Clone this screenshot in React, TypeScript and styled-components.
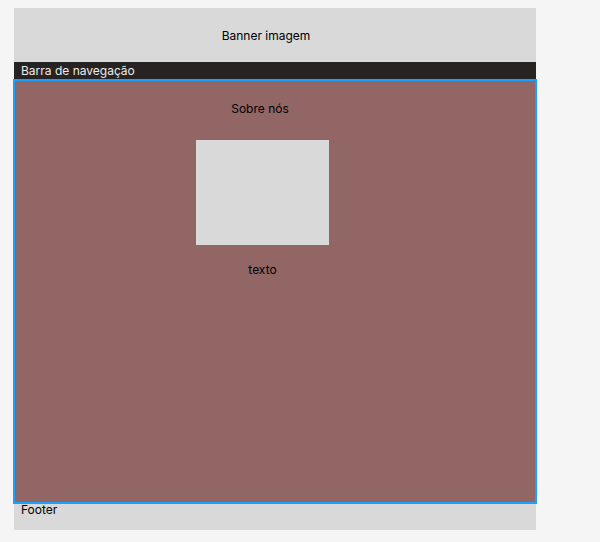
import React from "react";
import styled, { createGlobalStyle } from "styled-components";

const GlobalStyle = createGlobalStyle`
  html, body {
    margin: 0;
    padding: 0;
    background-color: #f5f5f5;
    font-family: Inter, "Noto Sans", sans-serif;
  }
`;

const App = () => {
  return (
    <>
      <GlobalStyle />
      <Page>
        <Frame>
          <Banner>Banner imagem</Banner>
          <NavBar>Barra de navegação</NavBar>
          <Main>
            <Column>
              <Title>Sobre nós</Title>
              <ImageBox />
              <Text>texto</Text>
            </Column>
          </Main>
          <Footer>Footer</Footer>
        </Frame>
      </Page>
    </>
  );
};

const Page = styled.div`
  width: 600px;
  height: 542px;
  padding: 8px 0 0 14px;
  box-sizing: border-box;
`;

const Frame = styled.div`
  display: flex;
  flex-direction: column;
  width: 522px;
`;

const Banner = styled.div`
  height: 54px;
  display: flex;
  align-items: center;
  justify-content: center;
  padding-right: 18px;
  background-color: #d9d9d9;
  color: #000;
  font-size: 12px;
`;

const NavBar = styled.div`
  height: 18px;
  display: flex;
  align-items: center;
  padding: 0 0 1px 7px;
  box-sizing: border-box;
  background-color: #272323;
  color: #ececec;
  font-size: 12px;
`;

const Main = styled.main`
  height: 423px;
  padding-top: 21px;
  box-sizing: border-box;
  background-color: #936666;
  outline: 2px solid #18a0fb;
  outline-offset: -1px;
  position: relative;
  z-index: 1;
`;

const Column = styled.div`
  display: flex;
  flex-direction: column;
  align-items: center;
  width: 133px;
  margin-left: 182px;
`;

const Title = styled.div`
  font-size: 12px;
  line-height: 15px;
  color: #000;
  margin-right: 5px;
`;

const ImageBox = styled.div`
  width: 133px;
  height: 105px;
  margin-top: 24px;
  background-color: #d9d9d9;
`;

const Text = styled.div`
  font-size: 12px;
  line-height: 15px;
  margin-top: 17px;
  color: #000;
`;

const Footer = styled.footer`
  height: 27px;
  padding-left: 7px;
  background-color: #d9d9d9;
  font-size: 12px;
  line-height: 14px;
  color: #000;
`;

export default App;
